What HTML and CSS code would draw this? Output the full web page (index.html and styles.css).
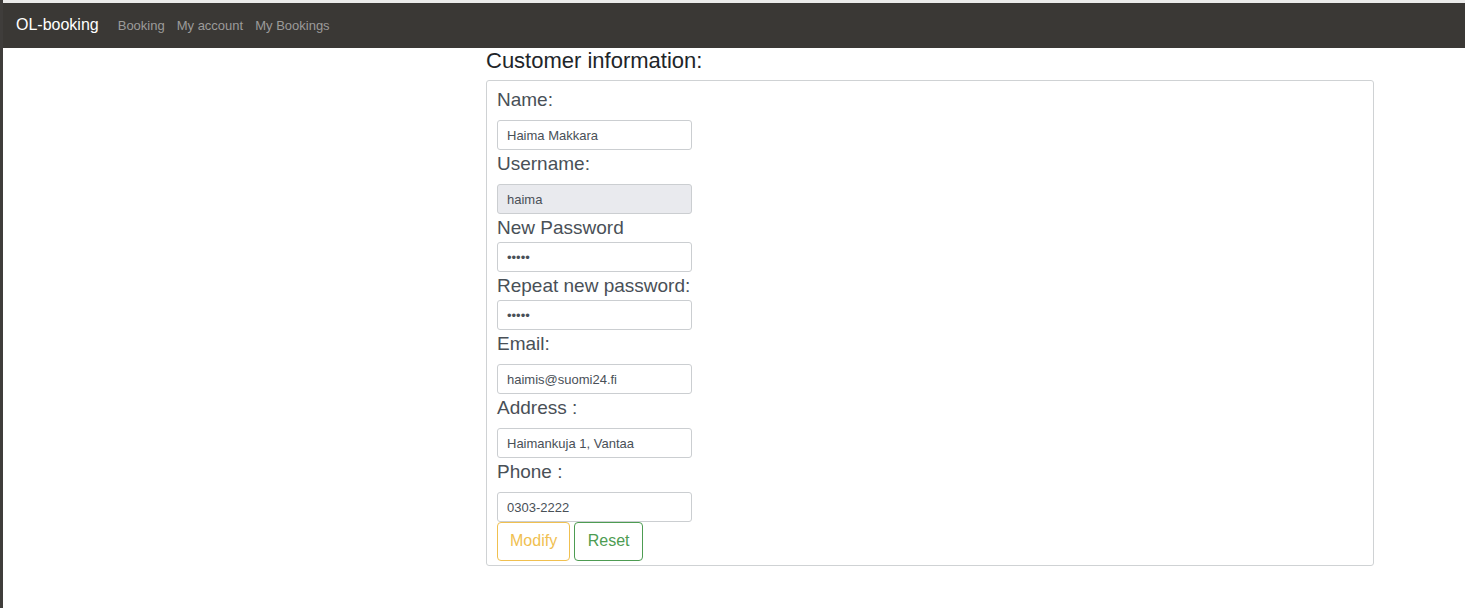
FILE: index.html
```html
<!DOCTYPE html>
<html lang="en">
<head>
<meta charset="utf-8">
<title>OL-booking</title>
<link rel="stylesheet" href="styles.css">
</head>
<body>
<header class="navbar">
  <a class="brand" href="#">OL-booking</a>
  <nav class="nav">
    <a href="#">Booking</a>
    <a href="#">My account</a>
    <a href="#">My Bookings</a>
  </nav>
</header>
<main class="content">
  <h1 class="title">Customer information:</h1>
  <form class="panel">
    <div class="field"><label class="label" for="name">Name:</label><input class="input" id="name" type="text" value="Haima Makkara"></div>
    <div class="field"><label class="label" for="username">Username:</label><input class="input" id="username" type="text" value="haima" readonly></div>
    <div class="field"><label class="label label-tight" for="password">New Password</label><input class="input" id="password" type="password" value="haima"></div>
    <div class="field"><label class="label label-tight" for="repeat">Repeat new password:</label><input class="input" id="repeat" type="password" value="haima"></div>
    <div class="field"><label class="label" for="email">Email:</label><input class="input" id="email" type="text" value="haimis@suomi24.fi"></div>
    <div class="field"><label class="label" for="address">Address :</label><input class="input" id="address" type="text" value="Haimankuja 1, Vantaa"></div>
    <div class="field"><label class="label" for="phone">Phone :</label><input class="input" id="phone" type="text" value="0303-2222"></div>
    <div class="actions">
      <button class="btn btn-modify" type="button">Modify</button>
      <button class="btn btn-reset" type="reset">Reset</button>
    </div>
  </form>
</main>
</body>
</html>
```
FILE: styles.css
```css
* { box-sizing: border-box; }
body {
  margin: 0;
  min-height: 100vh;
  border-left: 3px solid #3f3d3b;
  background: #fff;
  color: #212529;
  font-family: "Liberation Sans", Arial, sans-serif;
}
.navbar {
  display: flex;
  align-items: baseline;
  gap: 19px;
  padding: 10px 13px 11px;
  border-top: 3px solid #ebebea;
  background: #3a3835;
}
.brand { color: #fff; font-size: 16px; line-height: 24px; text-decoration: none; }
.nav { display: flex; gap: 12px; }
.nav a { color: #9c9b9a; font-size: 13px; line-height: 20px; text-decoration: none; }
.content {
  display: grid;
  grid-template-columns: 483fr 888fr 91fr;
  row-gap: 6px;
}
.title, .panel { grid-column: 2; }
.title { margin: 0; font-size: 22px; font-weight: 400; line-height: 26px; }
.panel {
  padding: 5px 10px 4px;
  border: 1px solid #cfd2d4;
  border-radius: 3px;
}
.field { display: flex; flex-direction: column; align-items: flex-start; }
.label { padding-bottom: 6px; color: #495057; font-size: 19px; line-height: 28px; }
.label-tight { padding-bottom: 0; }
.input {
  width: 195px;
  height: 30px;
  padding: 0 9px;
  border: 1px solid #cbced1;
  border-radius: 3px;
  background: #fff;
  color: #495057;
  font: 13px "Liberation Sans", Arial, sans-serif;
}
.input:read-only { background: #e9eaee; }
.actions { display: flex; gap: 4px; }
.btn {
  min-width: 69px;
  height: 39px;
  padding: 0 12px 2px;
  border: 1px solid;
  border-radius: 4px;
  background: #fff;
  font: 16px "Liberation Sans", Arial, sans-serif;
}
.btn-modify { color: #f0c050; }
.btn-reset { color: #4d9c52; }
```
